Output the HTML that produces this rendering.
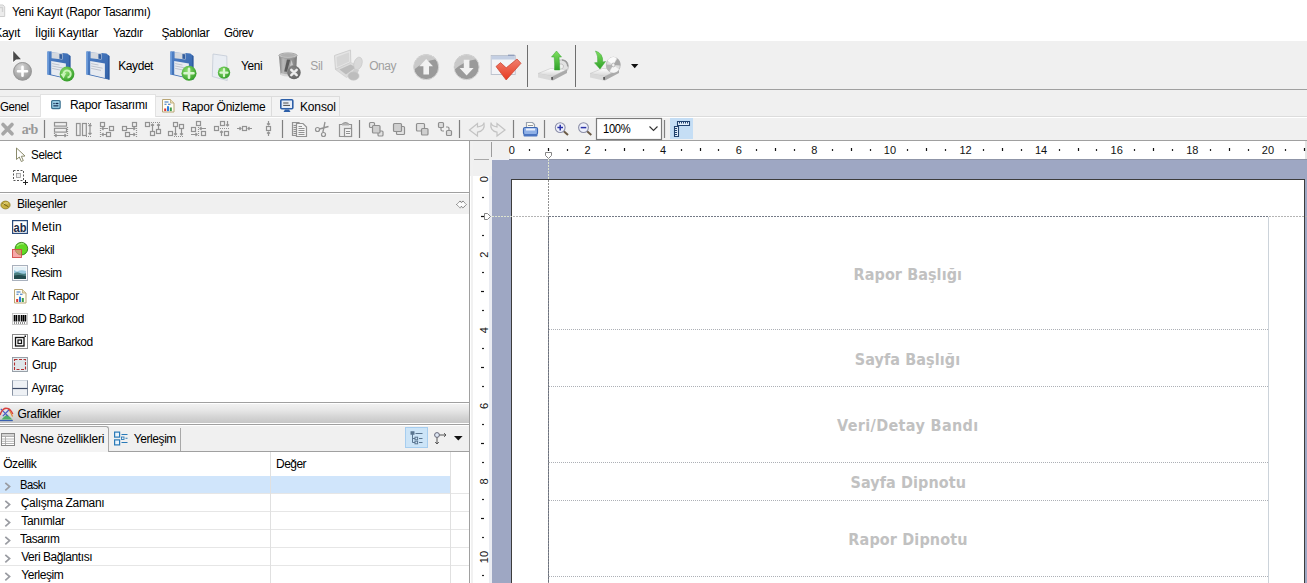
<!DOCTYPE html>
<html lang="tr">
<head>
<meta charset="utf-8">
<title>Yeni Kayıt (Rapor Tasarımı)</title>
<style>
*{box-sizing:border-box;margin:0;padding:0}
html,body{width:1307px;height:583px;overflow:hidden;background:#fff}
body{position:relative;font-family:"Liberation Sans","DejaVu Sans",sans-serif;font-size:12px;color:#000}
.a{position:absolute;white-space:nowrap}
.t{position:absolute;white-space:nowrap;line-height:16px;height:16px;letter-spacing:-0.3px}
.dis{color:#a0a0a0}
svg{position:absolute;overflow:visible}
/* regions */
#toolbar{left:0;top:41px;width:1307px;height:48px;background:#f0f0f0}
#tbline{left:0;top:89px;width:1307px;height:1px;background:#a0a0a0}
#tabarea{left:0;top:90px;width:1307px;height:28px;background:#f0f0f0}
#dtool{left:0;top:118px;width:1307px;height:22px;background:#f0f0f0}
#dline{left:0;top:140px;width:1307px;height:1px;background:#a0a0a0}
.tab{position:absolute;top:96px;height:20px;border:1px solid #dcdcdc;border-bottom:none;background:#f3f3f3}
.tab.act{background:#fff;top:94px;height:23px;border-color:#e2e2e2}
.band{position:absolute;left:548px;width:720px;height:20px;line-height:20px;text-align:center;font-family:"DejaVu Sans Condensed","DejaVu Sans",sans-serif;font-weight:bold;font-size:16px;color:#c1c1c1;white-space:nowrap}
.sep{position:absolute;width:1px;background:#a0a0a0}
</style>
</head>
<body>
<!-- title -->
<svg style="left:0;top:4px" width="6" height="14"><path d="M-6,1 H3 L4.700,2.600 V12.500 H-6 Z" fill="#ececec" stroke="#cdcdcd" stroke-width="1"/><path d="M-1,3.500 H3.200 M2.500,3.500 V8" stroke="#d2d2d2" stroke-width="1.400"/></svg>
<div class="t" style="left:11.9px;top:4px;letter-spacing:-0.30px">Yeni Kayıt (Rapor Tasarımı)</div>
<!-- menu -->
<div class="t" style="left:-5.8px;top:25px;letter-spacing:-0.30px">Kayıt</div>
<div class="t" style="left:35.0px;top:25px;letter-spacing:-0.11px">İlgili Kayıtlar</div>
<div class="t" style="left:112.8px;top:25px;transform-origin:0 0;transform:scaleX(0.954);letter-spacing:-0.47px">Yazdır</div>
<div class="t" style="left:161.4px;top:25px;letter-spacing:-0.30px">Şablonlar</div>
<div class="t" style="left:224.3px;top:25px;transform-origin:0 0;transform:scaleX(0.960);letter-spacing:-0.48px">Görev</div>

<div class="a" id="toolbar"></div>
<div class="a" id="tbline"></div>
<div class="a" id="tabarea"></div>
<div class="a" id="dtool"></div>
<div class="a" id="dline"></div>

<!-- TOOLBAR-START -->
<svg width="0" height="0" style="left:0;top:0">
<defs>
<linearGradient id="gFl" x1="0" y1="0" x2="1" y2="1"><stop offset="0" stop-color="#4f80c6"/><stop offset="1" stop-color="#3262a8"/></linearGradient>
<radialGradient id="gGr" cx="0.4" cy="0.35" r="0.7"><stop offset="0" stop-color="#8fe070"/><stop offset="1" stop-color="#2f9a25"/></radialGradient>
<radialGradient id="gGy" cx="0.4" cy="0.3" r="0.8"><stop offset="0" stop-color="#d8d8d8"/><stop offset="1" stop-color="#8a8a8a"/></radialGradient>
<linearGradient id="gGy2" x1="0" y1="0" x2="0" y2="1"><stop offset="0" stop-color="#c8c8c8"/><stop offset="1" stop-color="#8c8c8c"/></linearGradient>
<linearGradient id="gRed" x1="0" y1="0" x2="0" y2="1"><stop offset="0" stop-color="#f08070"/><stop offset="1" stop-color="#e8391f"/></linearGradient>
<linearGradient id="gDrv" x1="0" y1="0" x2="0" y2="1"><stop offset="0" stop-color="#ffffff"/><stop offset="1" stop-color="#d4d4d4"/></linearGradient>
<linearGradient id="gArr" x1="0" y1="0" x2="0" y2="1"><stop offset="0" stop-color="#7fe060"/><stop offset="1" stop-color="#2fa028"/></linearGradient>
<g id="floppy">
  <path d="M0.400,0.500 L4.500,0.300 L4.600,1.600 L15.500,2.300 L15.600,2 L20.400,2.400 L23.400,5.100 L23.400,28.800 L0.400,23.600 Z" fill="url(#gFl)"/>
  <path d="M0.400,0.500 L1.900,0.450 L1.900,23.950 L0.400,23.600 Z" fill="#6b9cdc"/>
  <path d="M22.300,4.200 L23.400,5.100 L23.400,28.800 L22.300,28.550 Z" fill="#2c569a"/>
  <path d="M4.600,1.600 L15.500,2.300 L15.500,8.500 L4.600,7.300 Z" fill="#d5d9df"/>
  <path d="M12.400,3 L15,3.200 L15,8 L12.400,7.700 Z" fill="#355f9e"/>
  <path d="M4.200,10 L18.900,12.600 L18.900,27 L4.200,23.600 Z" fill="#e7ebf1"/>
  <path d="M5.200,12.600 L12.500,14 M5.200,15 L16.500,17.200 M5.200,17.400 L15,19.400" stroke="#b4b9c3" stroke-width="0.800" fill="none"/>
</g>
</defs>
</svg>
<!-- icon 1: pointer + plus -->
<svg style="left:10px;top:48px" width="26" height="36" viewBox="10 48 26 36">
  <path d="M12.5,50 L12.5,63.5 L16,60.5 L22,60 Z" fill="#fff" opacity="0.9"/>
  <path d="M13.2,51 L13.2,62 L16,59.5 L21,59.2 Z" fill="#4a4a4a"/>
  <circle cx="22.5" cy="71.3" r="9.3" fill="url(#gGy)"/>
  <circle cx="22.5" cy="71.3" r="8.8" fill="none" stroke="#9a9a9a" stroke-width="1"/>
  <path d="M22.5,66.8 V75.8 M18,71.3 H27" stroke="#fff" stroke-width="2.6" stroke-linecap="round"/>
</svg>
<!-- icon 2: floppy + refresh -->
<svg style="left:47px;top:51px" width="30" height="32"><use href="#floppy"/>
  <circle cx="20" cy="23" r="7.4" fill="url(#gGr)"/>
  <path d="M16.8,24.5 A3.6,3.6 0 1 1 20.5,26.6" fill="none" stroke="#c9f4b8" stroke-width="2"/>
  <path d="M13.6,23 L19.200,22 L16.600,27.400 Z" fill="#c9f4b8"/>
</svg>
<!-- icon 3: floppy -->
<svg style="left:86px;top:51px" width="30" height="32"><use href="#floppy"/></svg>
<div class="t" style="left:118.3px;top:58px;letter-spacing:-0.44px">Kaydet</div>
<!-- icon 4: floppy + plus -->
<svg style="left:170px;top:51px" width="30" height="32"><use href="#floppy"/>
  <circle cx="19" cy="22.3" r="7.5" fill="url(#gGr)"/>
  <path d="M19,17.8 V26.8 M14.5,22.3 H23.5" stroke="#d9f5d0" stroke-width="2.6" stroke-linecap="round"/>
</svg>
<!-- icon 5: page + plus -->
<svg style="left:212px;top:53px" width="20" height="30">
  <path d="M1,1 L14.8,3 L15.2,27.5 L0.3,23.5 Z" fill="#e9edf3" stroke="#c3cad6" stroke-width="0.8"/>
  <circle cx="12" cy="19.6" r="6.2" fill="url(#gGr)"/>
  <path d="M12,16 V23.2 M8.4,19.6 H15.6" stroke="#d9f5d0" stroke-width="2.2" stroke-linecap="round"/>
</svg>
<div class="t" style="left:240.9px;top:58px;transform-origin:0 0;transform:scaleX(0.984);letter-spacing:-0.31px">Yeni</div>
<!-- icon 6: trash + x -->
<svg style="left:277px;top:52px" width="26" height="30">
  <defs><linearGradient id="gTr" x1="0" y1="0" x2="1" y2="0"><stop offset="0" stop-color="#7e7e7e"/><stop offset="0.22" stop-color="#b9b9b9"/><stop offset="0.5" stop-color="#a2a2a2"/><stop offset="0.8" stop-color="#8d8d8d"/><stop offset="1" stop-color="#777"/></linearGradient>
  <radialGradient id="gXb" cx="0.4" cy="0.35" r="0.75"><stop offset="0" stop-color="#8e8e8e"/><stop offset="1" stop-color="#5e5e5e"/></radialGradient></defs>
  <path d="M2,3.500 L20,3.500 L19,22.500 Q11,25.500 3.500,22.500 Z" fill="url(#gTr)"/>
  <path d="M3.600,21 Q11,23.500 19,21 L18.900,23 Q11,26 3.700,23 Z" fill="#d6d6d6"/>
  <ellipse cx="11" cy="3.600" rx="9.200" ry="2.700" fill="#c4c4c4" stroke="#9c9c9c" stroke-width="0.800"/>
  <ellipse cx="11" cy="3.300" rx="7.500" ry="1.600" fill="#b0b0b0"/>
  <path d="M10,7.500 L7.200,19.500 L10,19.800 L13.200,7.800 Z" fill="#5a5a5a"/>
  <path d="M14.500,8 L13,14 L16,13 Z" fill="#c8c8c8"/>
  <circle cx="17" cy="20.500" r="6.700" fill="url(#gXb)"/>
  <path d="M14.300,17.800 L19.700,23.200 M19.700,17.800 L14.300,23.200" stroke="#ececec" stroke-width="2.500" stroke-linecap="round"/>
</svg>
<div class="t dis" style="left:310.3px;top:58px;letter-spacing:-0.30px">Sil</div>
<!-- icon 7: laptop+stamp disabled -->
<svg style="left:333px;top:49px" width="32" height="32">
  <path d="M1.5,6.5 L17.5,1 L17.8,13.5 L2.5,20.5 Z" fill="#e4e4e4" stroke="#cfcfcf" stroke-width="1"/>
  <path d="M3.5,8 L16,3.5 L16.2,12.5 L4.2,18 Z" fill="#d6d6d6"/>
  <path d="M2.5,20.5 L17.8,13.5 L27,18 L13.5,28.5 Z" fill="#dcdcdc" stroke="#cfcfcf" stroke-width="0.8"/>
  <path d="M6.5,20.5 L17.5,15.5 L23,18.2 L13,25.5 Z" fill="#bcbcbc"/>
  <ellipse cx="25" cy="14.5" rx="4" ry="6.5" transform="rotate(18 25 14.5)" fill="#d9d9d9" stroke="#c6c6c6" stroke-width="0.6"/>
  <path d="M21,20 L26,21 L23.5,27 L18.5,25 Z" fill="#cdcdcd"/>
  <ellipse cx="20.5" cy="27" rx="5.6" ry="4.2" fill="#bdbdbd" stroke="#c9c9c9" stroke-width="0.6"/>
</svg>
<div class="t dis" style="left:369.2px;top:58px;letter-spacing:-0.43px">Onay</div>
<!-- icon 8/9: up/down -->
<svg style="left:412px;top:53px" width="28" height="28">
  <circle cx="14.2" cy="14.1" r="12.5" fill="#9a9a9a"/>
  <path d="M2.2,16.5 A12.4,12.4 0 0 1 24,6.2 Q12,8 2.2,16.5 Z" fill="#c9c9c9"/>
  <circle cx="14.2" cy="14.1" r="12.5" fill="none" stroke="#d6d6d6" stroke-width="1"/>
  <path d="M14.2,6 L21,13.2 L17,13.2 L17,21.5 L11.4,21.5 L11.4,13.2 L7.4,13.2 Z" fill="#f2f2f2"/>
</svg>
<svg style="left:452px;top:53px" width="28" height="28">
  <circle cx="14.6" cy="14.1" r="12.5" fill="#9a9a9a"/>
  <path d="M2.6,16.5 A12.4,12.4 0 0 1 24.4,6.2 Q12,8 2.6,16.5 Z" fill="#c9c9c9"/>
  <circle cx="14.6" cy="14.1" r="12.5" fill="none" stroke="#d6d6d6" stroke-width="1"/>
  <path d="M14.6,22.5 L21.6,15 L17.4,15 L17.4,6.8 L11.8,6.8 L11.8,15 L7.6,15 Z" fill="#f2f2f2"/>
</svg>
<!-- icon 10: window + check -->
<svg style="left:490px;top:54px" width="34" height="28">
  <rect x="1.2" y="1.5" width="24" height="19" fill="#f3f4f7" stroke="#b9bfcc" stroke-width="0.9"/>
  <rect x="1.6" y="1.9" width="23.2" height="3.6" fill="#c4cfe3"/>
  <path d="M18,1.2 h6.5" stroke="#7d8fb3" stroke-width="1"/>
  <path d="M6,12.5 L10.5,8.6 L16.2,13.8 L27,5 L31,9.3 L16.2,26 Z" fill="url(#gRed)" stroke="#c8402c" stroke-width="0.7"/>
</svg>
<div class="sep" style="left:527px;top:45px;height:42px;background:#6e6e6e"></div>
<!-- icon 11: drive up -->
<svg style="left:537px;top:49px" width="34" height="34">
  <path d="M20.500,11.500 Q31,8.500 31.500,17.500 Q31,23.500 24,25.500 L19.500,22 Q26.500,20.500 26.500,17 Q26,14 20.500,15.500 Z" fill="#e2e2e2" stroke="#b2b2b2" stroke-width="0.700"/>
  <path d="M25,11 Q30.500,11.500 30.800,17.500" fill="none" stroke="#9a9a9a" stroke-width="1.400"/>
  <path d="M1,24.500 L13.500,19.500 L30,20.500 L15.500,27.500 Z" fill="url(#gDrv)" stroke="#bdbdbd" stroke-width="0.500"/>
  <path d="M1,24.500 L15.500,27.500 L15.500,31.800 L1,28.500 Z" fill="#d9d9d9"/>
  <path d="M15.500,27.500 L30,20.500 L30,24 L15.500,31.800 Z" fill="#ababab"/>
  <rect x="14.500" y="28" width="1.100" height="2.800" fill="#111"/>
  <path d="M19.500,2 L24.500,8 L22,8 L22.500,15 L22.800,21 L17.500,21 L17.600,15 L17.200,8 L14.500,8 Z" fill="url(#gArr)" stroke="#35a52e" stroke-width="0.500"/>
</svg>
<div class="sep" style="left:575px;top:45px;height:42px;background:#6e6e6e"></div>
<!-- icon 12: drive down -->
<svg style="left:589px;top:49px" width="34" height="34">
  <path d="M1,24.500 L13.500,19.500 L30,20.500 L15.500,27.500 Z" fill="url(#gDrv)" stroke="#bdbdbd" stroke-width="0.500"/>
  <path d="M1,24.500 L15.500,27.500 L15.500,31.800 L1,28.500 Z" fill="#d9d9d9"/>
  <path d="M15.500,27.500 L30,20.500 L30,24 L15.500,31.800 Z" fill="#ababab"/>
  <rect x="14.500" y="28" width="1.100" height="2.800" fill="#111"/>
  <ellipse cx="24.300" cy="16" rx="7" ry="7.800" fill="#dedede" stroke="#b0b0b0" stroke-width="0.700"/>
  <path d="M24.300,16 L18.500,11.500 A7,7.800 0 0 1 27.500,9 Z" fill="#fafafa"/>
  <path d="M24.300,16 L30,20.500 A7,7.800 0 0 1 21,22.800 Z" fill="#f6f6f6"/>
  <path d="M24.300,16 L28.500,9.500 A7,7.800 0 0 1 31.300,16.500 Z" fill="#a8a8a8"/>
  <path d="M24.300,16 L20,22.500 A7,7.800 0 0 1 17.300,15.500 Z" fill="#b4b4b4"/>
  <ellipse cx="24.300" cy="16" rx="1.700" ry="1.900" fill="#f2f2f2" stroke="#9b9b9b" stroke-width="0.600"/>
  <path d="M6.500,2 Q14,4 13.800,13 L16.500,12.500 L11,20 L5.500,13.800 L8.600,13.500 Q9.500,7 6.500,2 Z" fill="url(#gArr)" stroke="#35a52e" stroke-width="0.500"/>
</svg>
<svg style="left:631px;top:64px" width="8" height="5"><path d="M0,0 H7.4 L3.7,4.2 Z" fill="#111"/></svg>
<!-- TOOLBAR-END -->
<!-- TABS-START -->
<div class="a" style="left:0;top:116px;width:1307px;height:2px;background:#fff;border-top:1px solid #dcdcdc"></div>
<div class="tab" style="left:-2px;width:43px"></div>
<div class="tab" style="left:155px;width:117px"></div>
<div class="tab" style="left:271px;width:69px"></div>
<div class="tab act" style="left:40px;width:116px"></div>
<div class="t" style="left:0.3px;top:99px;transform-origin:0 0;transform:scaleX(0.958);letter-spacing:-0.41px">Genel</div>
<svg style="left:51px;top:100px" width="10" height="10"><rect x="0.7" y="0.7" width="8.4" height="7.8" rx="0.9" fill="#aee4fa" stroke="#3a6f8f" stroke-width="1.3"/><path d="M2.3,3.5 H3.7 M4.500,3.500 H7.500 M2.300,5.900 H7.500" stroke="#10294f" stroke-width="1.400"/></svg>
<div class="t" style="left:70.0px;top:97px;letter-spacing:-0.30px">Rapor Tasarımı</div>
<svg style="left:162px;top:99px" width="13" height="14">
  <path d="M0.5,0.5 H8.5 L12,4 V13 H0.5 Z" fill="#fffef4" stroke="#b9a676" stroke-width="1"/>
  <path d="M8.5,0.5 V4 H12" fill="#e9dfb8" stroke="#b9a676" stroke-width="0.8"/>
  <path d="M2.5,3 H6.5 M2.5,5.2 H4.5 M6,5.2 H8.5" stroke="#2f6cc0" stroke-width="1.1"/>
  <rect x="2.2" y="9.5" width="2" height="2.6" fill="#d33"/><rect x="5" y="7.2" width="2" height="4.9" fill="#2c7be0"/><rect x="7.8" y="8.5" width="2" height="3.6" fill="#3a9a4a"/>
</svg>
<div class="t" style="left:182.0px;top:99px;letter-spacing:-0.24px">Rapor Önizleme</div>
<svg style="left:280px;top:99px" width="14" height="14">
  <rect x="0.8" y="0.8" width="12" height="9" rx="1" fill="#e8eef8" stroke="#2d5fa8" stroke-width="1.6"/>
  <path d="M3.2,4 H8.5 M3.2,6.4 H10" stroke="#4a4a4a" stroke-width="1"/>
  <path d="M5,10.5 H9 L10.5,13 H3.5 Z" fill="#2d5fa8"/>
</svg>
<div class="t" style="left:299.9px;top:99px;letter-spacing:-0.12px">Konsol</div>
<!-- TABS-END -->
<!-- DTOOL-START -->
<svg style="left:0;top:118px" width="700" height="22" viewBox="0 118 700 22" fill="none" stroke="#929292" stroke-width="1.2">
  <!-- X -->
  <path d="M3,124.5 L12,133.8 M12,124.5 L3,133.8" stroke="#a6a6a6" stroke-width="3.6" stroke-linecap="round"/>
  <text x="21.8" y="133.8" font-family="Liberation Serif,serif" font-weight="bold" font-size="14" fill="#989898" stroke="none" textLength="16.4" lengthAdjust="spacing">a·b</text>
  <path d="M44.5,120 V138" stroke="#7f7f7f"/>
  <!-- same width -->
  <rect x="54.5" y="122.5" width="12" height="3.6"/><rect x="54.5" y="128.3" width="12" height="3.8"/>
  <path d="M55,135.5 H66 M56.5,134 L55,135.5 L56.5,137 M64.5,134 L66,135.5 L64.5,137" />
  <path d="M67.5,127 V137" stroke-dasharray="1 1"/><path d="M54.5,133 V137" stroke-dasharray="1 1"/>
  <!-- same height -->
  <rect x="76.5" y="123.5" width="3.6" height="12"/><rect x="82.5" y="123.5" width="3.8" height="12"/>
  <path d="M90,124.5 V134.5 M88.5,126 L90,124.5 L91.500,126 M88.5,133 L90,134.5 L91.5,133"/>
  <path d="M86,123.500 H92 M86,136.5 H92" stroke-dasharray="1 1"/>
  <!-- align left -->
  <rect x="100.500" y="122.500" width="4" height="4"/><rect x="109.500" y="126.500" width="4" height="4"/><rect x="106.500" y="132.500" width="4" height="4"/>
  <path d="M100.500,128 V137" stroke-dasharray="1 1"/><path d="M102,128.500 H108 M103.500,127 L102,128.500 L103.500,130 M102,134.500 H106 M103.500,133 L102,134.500 L103.500,136"/>
  <!-- align right -->
  <rect x="132.500" y="122.500" width="4" height="4"/><rect x="122.500" y="126.500" width="4" height="4"/><rect x="125.500" y="132.500" width="4" height="4"/>
  <path d="M136.500,128 V137" stroke-dasharray="1 1"/><path d="M127,128.500 H135 M133.500,127 L135,128.500 L133.500,130 M130,134.500 H135 M133.500,133 L135,134.500 L133.500,136"/>
  <!-- align top -->
  <rect x="145.500" y="122.500" width="4" height="4"/><rect x="156.500" y="129.500" width="4" height="4"/><rect x="150.500" y="131.500" width="4" height="4"/>
  <path d="M151,122.500 H160" stroke-dasharray="1 1"/><path d="M152.500,124 V131 M151,125.500 L152.500,124 L154,125.500 M158.500,124 V129 M157,125.500 L158.500,124 L160,125.500"/>
  <!-- align bottom -->
  <rect x="173.500" y="122.500" width="4" height="4"/><rect x="179.500" y="124.500" width="4" height="4"/><rect x="168.500" y="131.500" width="4" height="4"/>
  <path d="M174,136.500 H184" stroke-dasharray="1 1"/><path d="M175.500,127 V135 M174,133.500 L175.500,135 L177,133.500 M181.500,129 V135 M180,133.500 L181.500,135 L183,133.500"/>
  <!-- center h -->
  <rect x="196.500" y="121.500" width="4" height="4"/><rect x="191.500" y="127.500" width="4" height="4"/><rect x="201.500" y="131.500" width="4" height="4"/>
  <path d="M198.500,127 V137" stroke-dasharray="1 1"/><path d="M200,128.500 H206 M201.500,127 L200,128.500 L201.500,130 M191,134.500 H197 M195.500,133 L197,134.500 L195.500,136"/>
  <!-- center v -->
  <rect x="220.500" y="121.500" width="4" height="4"/><rect x="214.500" y="126.500" width="4" height="4"/><rect x="224.500" y="131.500" width="4" height="4"/>
  <path d="M220,128.500 H229" stroke-dasharray="1 1"/><path d="M227.500,121 V126 M226,124.500 L227.500,126 L229,124.500 M221.500,131 V136 M220,132.500 L221.500,131 L223,132.500"/>
  <!-- h center in band -->
  <rect x="242.500" y="126.500" width="4" height="4"/><path d="M237,128.500 H241 M239.500,127 L241,128.500 L239.500,130 M248,128.500 H252 M249.500,127 L248,128.500 L249.500,130"/>
  <!-- v center in band -->
  <rect x="266.500" y="126.500" width="4" height="4"/><path d="M268.500,121 V125 M267,123.500 L268.500,125 L270,123.500 M268.500,132 V136 M267,133.500 L268.500,132 L270,133.500"/>
  <path d="M282.500,120 V138" stroke="#7f7f7f"/>
  <!-- copy -->
  <path d="M292.500,122.500 H299 V135.500 H292.500 Z" fill="#e9e9e9"/><path d="M293.500,125.500 H296 M293.500,127.500 H296 M293.500,129.500 H296 M293.500,131.500 H296 M293.500,133.500 H296"/>
  <path d="M296.500,123.500 H303 L306.500,127 V136.500 H296.500 Z" fill="#f4f4f4"/><path d="M298.500,126.500 H302 M298.500,128.500 H304.500 M298.500,130.500 H304.500 M298.500,132.500 H304.500 M298.500,134.500 H304.500"/>
  <!-- cut -->
  <circle cx="317.500" cy="129.500" r="2"/><circle cx="323.500" cy="134.500" r="2"/>
  <path d="M319.500,129 L328.500,126.500 M322.800,132.500 L325,122" stroke-width="1.3"/>
  <!-- paste -->
  <path d="M339.500,124.500 H351.500 V136.500 H339.500 Z" fill="#ebebeb"/><path d="M342,124.500 Q345.500,121 349,124.500" /><rect x="342" y="123.500" width="7" height="2" fill="#b0b0b0" stroke="none"/>
  <rect x="344.500" y="128.500" width="7" height="8" fill="#f7f7f7"/><path d="M346,131.500 H350 M346,133.500 H350"/>
  <path d="M359.500,120 V138" stroke="#7f7f7f"/>
  <!-- layering -->
  <g stroke="#8f8f8f" stroke-width="1.2">
  <rect x="369.500" y="122.500" width="5" height="5" rx="1" fill="#e2e2e2"/><rect x="378" y="131" width="5" height="5" rx="1" fill="#e2e2e2"/><rect x="372.500" y="125.500" width="7.500" height="7.500" rx="1" fill="#cfcfcf"/>
  <rect x="396.500" y="126.500" width="8" height="8" rx="1" fill="#e2e2e2"/><rect x="393.500" y="123.500" width="8" height="8" rx="1" fill="#cfcfcf"/>
  <rect x="416.500" y="123.500" width="8" height="7.500" rx="1" fill="#e2e2e2"/><rect x="421.500" y="128.500" width="6.500" height="6.500" rx="1" fill="#cfcfcf"/>
  <rect x="438.500" y="122.500" width="5" height="5" rx="1" fill="#dcdcdc"/><rect x="446.500" y="130.500" width="5" height="5" rx="1" fill="#dcdcdc"/><path d="M441,127.500 V129.500 Q441,131 442.500,131 H444 M449,130.500 V128.500 Q449,127 447.500,127 H446" fill="none"/>
  </g>
  <path d="M459.500,120 V138" stroke="#7f7f7f"/>
  <!-- undo / redo -->
  <path d="M469.500,130 L477.500,123.500 V127 Q484,126 484,122.500 Q485.500,131 477.500,132.200 V136 Z" stroke="#c3c3c3" fill="#efefef"/>
  <path d="M505,130 L497,123.500 V127 Q491,126 491,122.500 Q489.500,131 497,132.200 V136 Z" stroke="#c3c3c3" fill="#efefef"/>
  <path d="M513.500,120 V138" stroke="#7f7f7f"/>
  <!-- print -->
  <path d="M526.500,122.500 H532.500 L534.500,124.500 V129 H526.500 Z" fill="#fbfbf6" stroke="#9aa3b0"/><path d="M528,125.500 H533 M528,127.500 H533" stroke="#8a8a8a" stroke-width="0.9"/>
  <rect x="523.500" y="127.500" width="14" height="7" rx="1.500" fill="#8fb0e6" stroke="#3d67b4"/><rect x="526" y="128.500" width="9" height="2" fill="#e8eefc" stroke="none"/>
  <rect x="523.500" y="134" width="14" height="2.500" rx="1" fill="#4a74c0" stroke="none"/>
  <path d="M544.500,120 V138" stroke="#7f7f7f"/>
  <!-- zoom in/out -->
  <path d="M563.500,131 L568,135" stroke="#6b5a45" stroke-width="2"/><circle cx="560.200" cy="127.600" r="4.900" fill="#eef0fb" stroke="#8c8fa8" stroke-width="1.100"/><path d="M557.400,127.600 H563 M560.200,124.800 V130.400" stroke="#2a32a8" stroke-width="1.500"/>
  <path d="M586.800,131 L591.300,135" stroke="#6b5a45" stroke-width="2"/><circle cx="583.500" cy="127.600" r="4.900" fill="#eef0fb" stroke="#8c8fa8" stroke-width="1.100"/><path d="M580.700,127.600 H586.300" stroke="#2a32a8" stroke-width="1.500"/>
  <!-- combo -->
  <rect x="596.500" y="118.500" width="65" height="21" fill="#fff" stroke="#7a7a7a"/>
  <path d="M649.500,126.500 L653.500,130.500 L657.500,126.500" stroke="#333" stroke-width="1.100"/>
  <path d="M664.500,120 V138" stroke="#7f7f7f"/>
  <!-- ruler button -->
  <rect x="670" y="118" width="23" height="21" fill="#c5def5" stroke="none"/>
  <path d="M677.500,121.500 H689.500 V125.500 H677.500 Z M674.500,126.500 H678.500 V136.500 H674.500 Z" fill="#e4f0fb" stroke="#21426e" stroke-width="1.100"/>
  <path d="M679.500,121.500 V123.500 M681.500,121.500 V123.500 M683.500,121.500 V123.500 M685.500,121.500 V123.500 M687.500,121.500 V123.500 M675,128.500 H677 M675,130.500 H677 M675,132.500 H677 M675,134.500 H677" stroke="#21426e" stroke-width="1"/>
</svg>
<div class="t" style="left:602.9px;top:121px;font-size:12.500px;transform-origin:0 0;transform:scaleX(0.895);letter-spacing:-0.38px">100%</div>
<!-- DTOOL-END -->
<!-- LEFT-START -->
<div class="a" style="left:0;top:141px;width:469px;height:442px;background:#fff"></div>
<div class="a" style="left:469px;top:141px;width:1px;height:442px;background:#a0a0a0"></div>
<svg style="left:15px;top:147px" width="12" height="16"><path d="M1.500,1 V12.500 L4.300,10 L6.300,14.500 L8.300,13.600 L6.300,9.300 L10,9 Z" fill="#fff" stroke="#8a8a6a" stroke-width="1"/></svg>
<div class="t" style="left:30.8px;top:147px;transform-origin:0 0;transform:scaleX(0.972);letter-spacing:-0.36px">Select</div>
<svg style="left:12px;top:169px" width="18" height="17"><rect x="1.500" y="1.500" width="10" height="10" fill="none" stroke="#555" stroke-width="1" stroke-dasharray="2 1.500"/><rect x="4.500" y="4.500" width="4" height="4" fill="#eee" stroke="#999" stroke-width="0.800"/><path d="M13.500,11 V16 M11,13.500 H16" stroke="#222" stroke-width="1"/></svg>
<div class="t" style="left:31.3px;top:170px;letter-spacing:-0.22px">Marquee</div>
<div class="a" style="left:0;top:192px;width:469px;height:1px;background:#a0a0a0"></div>
<div class="a" style="left:0;top:194px;width:469px;height:20px;background:#f0f0f0"></div>
<svg style="left:0;top:200px" width="12" height="10"><ellipse cx="5.500" cy="5" rx="4.600" ry="3.900" fill="#c8b040" stroke="#8a7a20" stroke-width="0.800"/><path d="M2.500,3.500 L8.500,6.800" stroke="#6f5f18" stroke-width="1"/><path d="M2.600,4.800 Q5,2 8,3" stroke="#efe4a0" stroke-width="0.800" fill="none"/></svg>
<div class="t" style="left:16.9px;top:196px;letter-spacing:-0.30px">Bileşenler</div>
<svg style="left:456px;top:200px" width="11" height="9"><path d="M0.600,4.500 L4.200,0.900 L5.500,2.800 L6.800,0.900 L10.400,4.500 L6.800,8.100 L5.500,6.200 L4.200,8.100 Z" fill="#fdfdfd" stroke="#5a5a5a" stroke-width="0.900" stroke-dasharray="1.200 0.500"/></svg>
<div class="t" style="left:31.4px;top:219px;letter-spacing:0.25px">Metin</div>
<div class="t" style="left:31.4px;top:242px;transform-origin:0 0;transform:scaleX(0.970);letter-spacing:-0.40px">Şekil</div>
<div class="t" style="left:31.4px;top:265px;transform-origin:0 0;transform:scaleX(0.972);letter-spacing:-0.55px">Resim</div>
<div class="t" style="left:31.6px;top:288px;letter-spacing:-0.31px">Alt Rapor</div>
<div class="t" style="left:31.8px;top:311px;transform-origin:0 0;transform:scaleX(0.983);letter-spacing:-0.44px">1D Barkod</div>
<div class="t" style="left:31.2px;top:334px;letter-spacing:-0.48px">Kare Barkod</div>
<div class="t" style="left:31.5px;top:357px;transform-origin:0 0;transform:scaleX(0.972);letter-spacing:-0.43px">Grup</div>
<div class="t" style="left:31.4px;top:380px;letter-spacing:-0.29px">Ayıraç</div>
<svg style="left:12px;top:220px" width="16" height="14"><rect x="0.600" y="0.600" width="14.800" height="12.800" fill="#fff" stroke="#2b4a7a" stroke-width="1.200"/><text x="1.500" y="11.600" font-family="Liberation Sans,sans-serif" font-weight="bold" font-size="12.500" fill="#1c2b45" textLength="13" lengthAdjust="spacingAndGlyphs">ab</text></svg>
<svg style="left:12px;top:241px" width="17" height="17"><circle cx="9.400" cy="7.700" r="6.300" fill="#62d824" stroke="#2f7f14" stroke-width="0.900"/><path d="M5,5 Q8,1.800 12,3" stroke="#a8f080" stroke-width="1.300" fill="none"/><rect x="0.500" y="8.500" width="9" height="8" fill="#f28888" fill-opacity="0.720" stroke="#d24a4a" stroke-width="0.900"/></svg>
<svg style="left:12px;top:265px" width="16" height="16"><rect x="0.500" y="0.500" width="15" height="15" fill="#f7f8fa" stroke="#a9b1bd" stroke-width="1"/><rect x="2" y="2" width="12" height="12" fill="#9ccbe0"/><path d="M2,2 H14 V6 Q9,4.500 5,6.500 L2,5 Z" fill="#e4f1f7"/><path d="M2,8.500 Q5,6.500 8,8 T14,8.200 V14 H2 Z" fill="#4a7f80"/><path d="M2,10.500 Q7,9 14,11.200 V14 H2 Z" fill="#234c4e"/></svg>
<svg style="left:14px;top:289px" width="13" height="15"><path d="M0.500,0.500 H8.500 L12,4 V14 H0.500 Z" fill="#fffef4" stroke="#b9a676" stroke-width="1"/><path d="M8.500,0.500 V4 H12" fill="#e9dfb8" stroke="#b9a676" stroke-width="0.800"/><path d="M2.500,3 H6.500 M2.500,5.200 H4.500 M6,5.200 H8.500" stroke="#2f6cc0" stroke-width="1.100"/><rect x="2.200" y="10" width="2" height="3" fill="#d33"/><rect x="5" y="7.700" width="2" height="5.300" fill="#2c7be0"/><rect x="7.800" y="9" width="2" height="4" fill="#3a9a4a"/></svg>
<svg style="left:12px;top:313px" width="16" height="12"><rect x="0.500" y="0.500" width="15" height="11" fill="#fff" stroke="#c0c0c0" stroke-width="0.800"/><path d="M2.500,2 V8.500 M4.500,2 V8.500 M7,2 V8.500 M9.500,2 V8.500 M11.500,2 V8.500 M13.500,2 V8.500" stroke="#000" stroke-width="1.600"/><path d="M2,10 H14.500" stroke="#222" stroke-width="1" stroke-dasharray="1 1"/></svg>
<svg style="left:12px;top:334px" width="16" height="15"><rect x="0.500" y="0.500" width="15" height="14" fill="#fff" stroke="#8a8a8a" stroke-width="1"/><rect x="3.500" y="3.500" width="8.500" height="8.500" fill="none" stroke="#111" stroke-width="1.300"/><rect x="6" y="6" width="3.500" height="3.500" fill="none" stroke="#111" stroke-width="1.200"/><rect x="12.500" y="1.500" width="1.500" height="1.500" fill="#111"/></svg>
<svg style="left:12px;top:357px" width="16" height="15"><rect x="0.500" y="0.500" width="15" height="14" fill="#e9eef2" stroke="#8f979f" stroke-width="0.900"/><rect x="2.500" y="2.500" width="11" height="10" fill="#dfe6ea" stroke="#b03030" stroke-width="1.100" stroke-dasharray="3 1.500"/></svg>
<svg style="left:12px;top:380px" width="16" height="16"><rect x="0.500" y="0.500" width="15" height="15" fill="#eef1f5" stroke="#c4ccd6" stroke-width="0.800"/><path d="M0.500,0.500 V15.500 M15.500,0.500 V15.500" stroke="#8a94a4" stroke-width="1"/><path d="M0.500,8.500 H15.500" stroke="#3c4a66" stroke-width="1.200"/></svg>
<div class="a" style="left:0;top:402px;width:469px;height:23px;background:#fff;border-top:1px solid #a0a0a0;border-bottom:1px solid #a0a0a0"></div>
<div class="a" style="left:0;top:404px;width:469px;height:19px;background:linear-gradient(#f1f1f1,#e8e8e8 30%,#d6d6d6 65%,#c6c6c6)"></div>
<svg style="left:0;top:407px" width="13" height="14"><path d="M0,13.500 H12.800" stroke="#3a5fb0" stroke-width="1.300"/><path d="M1.500,12.600 Q4,9.500 6.800,7.400 Q10,9.500 12.300,12.600 Z" fill="#4fae68"/><path d="M8.800,2 L12.600,9.500" stroke="#e58a35" stroke-width="1.200" fill="none"/><path d="M0.800,1.800 L8,9.200 M2.800,9.200 L9.800,2" fill="none" stroke="#4a5cc4" stroke-width="1.200"/><path d="M0,8 Q2.500,0.800 6.500,1.200 Q10.500,1.500 12.800,7" fill="none" stroke="#d9403c" stroke-width="1.400"/></svg>
<div class="t" style="left:17.4px;top:406px;letter-spacing:-0.25px">Grafikler</div>
<div class="a" style="left:0;top:425px;width:469px;height:26px;background:#f0f0f0;border-top:1px solid #fff"></div>
<div class="a" style="left:0;top:451px;width:469px;height:1px;background:#a0a0a0"></div>
<div class="a" style="left:108px;top:428px;width:73px;height:23px;background:#f0f0f0;border-right:1px solid #a8a8a8"></div>
<div class="a" style="left:-1px;top:426px;width:110px;height:26px;background:#f3f3f3;border:1px solid #a8a8a8;border-bottom:none;border-radius:0 3px 0 0"></div>
<svg style="left:1px;top:433px" width="15" height="13"><rect x="0.500" y="0.500" width="13" height="12" fill="#fff" stroke="#868686" stroke-width="1"/><rect x="1" y="1" width="12" height="2.300" fill="#d2d2d2"/><path d="M1,3.500 H13 M1,6 H13 M1,8.300 H13 M1,10.500 H13 M4.500,3.500 V12" stroke="#a2a2a2" stroke-width="0.800"/></svg>
<div class="t" style="left:19.9px;top:431px;letter-spacing:-0.18px">Nesne özellikleri</div>
<svg style="left:114px;top:431px" width="14" height="15"><rect x="0.600" y="1.100" width="5" height="5" fill="#eaf4fc" stroke="#2a7ab8" stroke-width="1.200"/><rect x="0.600" y="8.900" width="5" height="5" fill="#eaf4fc" stroke="#2a7ab8" stroke-width="1.200"/><rect x="7.500" y="6" width="2.500" height="2.500" fill="none" stroke="#2a7ab8" stroke-width="0.900"/><path d="M7.500,3.500 H13.500 M11.500,7.300 H13.500 M7.500,11.500 H13.500" stroke="#2a7ab8" stroke-width="1.100"/></svg>
<div class="t" style="left:133.8px;top:431px;letter-spacing:-0.43px">Yerleşim</div>
<div class="a" style="left:405px;top:427px;width:23px;height:21px;background:#cce4f7;border:1px solid #a6cdef"></div>
<svg style="left:410px;top:431px" width="14" height="14" fill="none" stroke="#5a7590" stroke-width="1"><path d="M2.500,3 V11.500 H5 M2.500,7.500 H5"/><rect x="1" y="0.800" width="3" height="2.400" fill="#5a7590"/><rect x="5" y="6.200" width="2.600" height="2.600"/><rect x="5" y="10.200" width="2.600" height="2.600"/><path d="M5.500,2.500 H12.500 M9,7.500 H12.500 M9,11.500 H12.500"/></svg>
<svg style="left:433px;top:431px" width="15" height="14" fill="none" stroke="#555" stroke-width="1"><circle cx="4" cy="4" r="2.400" fill="#dfe8f4" stroke="#667"/><path d="M6.500,4 H13 M11,2.200 L13,4 L11,5.800 M4,6.500 V13 M2.200,11 L4,13 L5.800,11"/></svg>
<svg style="left:454px;top:436px" width="9" height="5"><path d="M0,0 H8.600 L4.300,4.600 Z" fill="#111"/></svg>
<div class="t" style="left:3.2px;top:456px;letter-spacing:-0.42px">Özellik</div>
<div class="t" style="left:276.0px;top:456px;letter-spacing:-0.53px">Değer</div>
<div class="a" style="left:0;top:476px;width:450px;height:18px;background:#d0e5fb"></div>
<div class="a" style="left:0;top:493px;width:469px;height:1px;background:#e6e6e6"></div>
<div class="a" style="left:0;top:511px;width:469px;height:1px;background:#e6e6e6"></div>
<div class="a" style="left:0;top:529px;width:469px;height:1px;background:#e6e6e6"></div>
<div class="a" style="left:0;top:547px;width:469px;height:1px;background:#e6e6e6"></div>
<div class="a" style="left:0;top:565px;width:469px;height:1px;background:#e6e6e6"></div>
<div class="a" style="left:270px;top:452px;width:1px;height:131px;background:#e0e0e0"></div>
<div class="a" style="left:450px;top:452px;width:1px;height:131px;background:#e0e0e0"></div>
<svg style="left:4px;top:482px" width="8" height="10"><path d="M1.300,0.800 L5.600,4.600 L1.300,8.400" fill="none" stroke="#9a9ca2" stroke-width="1.700"/></svg>
<div class="t" style="left:20.3px;top:477px;transform-origin:0 0;transform:scaleX(0.935);letter-spacing:-0.55px">Baskı</div>
<svg style="left:4px;top:500px" width="8" height="10"><path d="M1.300,0.800 L5.600,4.600 L1.300,8.400" fill="none" stroke="#9a9ca2" stroke-width="1.700"/></svg>
<div class="t" style="left:20.7px;top:495px;letter-spacing:-0.31px">Çalışma Zamanı</div>
<svg style="left:4px;top:518px" width="8" height="10"><path d="M1.300,0.800 L5.600,4.600 L1.300,8.400" fill="none" stroke="#9a9ca2" stroke-width="1.700"/></svg>
<div class="t" style="left:21.2px;top:513px;letter-spacing:-0.30px">Tanımlar</div>
<svg style="left:4px;top:536px" width="8" height="10"><path d="M1.300,0.800 L5.600,4.600 L1.300,8.400" fill="none" stroke="#9a9ca2" stroke-width="1.700"/></svg>
<div class="t" style="left:20.3px;top:531px;transform-origin:0 0;transform:scaleX(0.989);letter-spacing:-0.39px">Tasarım</div>
<svg style="left:4px;top:554px" width="8" height="10"><path d="M1.300,0.800 L5.600,4.600 L1.300,8.400" fill="none" stroke="#9a9ca2" stroke-width="1.700"/></svg>
<div class="t" style="left:21.2px;top:549px;letter-spacing:-0.43px">Veri Bağlantısı</div>
<svg style="left:4px;top:572px" width="8" height="10"><path d="M1.300,0.800 L5.600,4.600 L1.300,8.400" fill="none" stroke="#9a9ca2" stroke-width="1.700"/></svg>
<div class="t" style="left:21.2px;top:567px;letter-spacing:-0.43px">Yerleşim</div>
<!-- LEFT-END -->
<!-- RIGHT-START -->
<div class="a" style="left:470px;top:141px;width:837px;height:442px;background:#fff"></div>
<div class="a" style="left:492px;top:159px;width:815px;height:424px;background:#9ea7c3"></div>
<div class="a" style="left:492px;top:159px;width:17px;height:1px;background:#eef0f6"></div>
<div class="a" style="left:509px;top:159px;width:798px;height:1px;background:#8f95a8"></div>
<div class="a" style="left:470px;top:141px;width:40px;height:18px;background:#f0f0f0"></div>
<div class="a" style="left:470px;top:159px;width:22px;height:17px;background:#f0f0f0"></div>
<div class="a" style="left:471px;top:141px;width:2px;height:442px;background:#f1f1f1"></div>
<div class="a" style="left:489px;top:176px;width:3px;height:407px;background:#eaecf2"></div>
<div class="a" style="left:1305px;top:141px;width:2px;height:18px;background:#e4e4e4"></div>
<div class="a" style="left:491px;top:142px;width:1px;height:15px;background:#9c9c9c"></div>
<div class="a" style="left:474px;top:159px;width:15px;height:1px;background:#a8a8a8"></div>
<div class="a" style="left:511px;top:179px;width:794px;height:410px;background:#fff;border:1px solid #3c3c3c"></div>
<svg style="left:470px;top:141px" width="837" height="442" viewBox="470 141 837 442" font-family="Liberation Sans,sans-serif" font-size="11" fill="#111">
<text x="511.9" y="153.8" text-anchor="middle">0</text>
<rect x="528.9" y="149" width="1.2" height="2" fill="#222"/>
<rect x="547.9" y="148" width="1.2" height="3" fill="#111"/>
<rect x="566.9" y="149" width="1.2" height="2" fill="#222"/>
<text x="587.5" y="153.8" text-anchor="middle">2</text>
<rect x="604.9" y="149" width="1.2" height="2" fill="#222"/>
<rect x="623.9" y="148" width="1.2" height="3" fill="#111"/>
<rect x="642.9" y="149" width="1.2" height="2" fill="#222"/>
<text x="663.1" y="153.8" text-anchor="middle">4</text>
<rect x="680.9" y="149" width="1.2" height="2" fill="#222"/>
<rect x="699.9" y="148" width="1.2" height="3" fill="#111"/>
<rect x="717.9" y="149" width="1.2" height="2" fill="#222"/>
<text x="738.7" y="153.8" text-anchor="middle">6</text>
<rect x="755.9" y="149" width="1.2" height="2" fill="#222"/>
<rect x="774.9" y="148" width="1.2" height="3" fill="#111"/>
<rect x="793.9" y="149" width="1.2" height="2" fill="#222"/>
<text x="814.3" y="153.8" text-anchor="middle">8</text>
<rect x="831.9" y="149" width="1.2" height="2" fill="#222"/>
<rect x="850.9" y="148" width="1.2" height="3" fill="#111"/>
<rect x="869.9" y="149" width="1.2" height="2" fill="#222"/>
<text x="889.9" y="153.8" text-anchor="middle">10</text>
<rect x="906.9" y="149" width="1.2" height="2" fill="#222"/>
<rect x="925.9" y="148" width="1.2" height="3" fill="#111"/>
<rect x="944.9" y="149" width="1.2" height="2" fill="#222"/>
<text x="965.5" y="153.8" text-anchor="middle">12</text>
<rect x="982.9" y="149" width="1.2" height="2" fill="#222"/>
<rect x="1001.9" y="148" width="1.2" height="3" fill="#111"/>
<rect x="1020.9" y="149" width="1.2" height="2" fill="#222"/>
<text x="1041.1" y="153.8" text-anchor="middle">14</text>
<rect x="1058.9" y="149" width="1.2" height="2" fill="#222"/>
<rect x="1077.9" y="148" width="1.2" height="3" fill="#111"/>
<rect x="1095.9" y="149" width="1.2" height="2" fill="#222"/>
<text x="1116.7" y="153.8" text-anchor="middle">16</text>
<rect x="1133.9" y="149" width="1.2" height="2" fill="#222"/>
<rect x="1152.9" y="148" width="1.2" height="3" fill="#111"/>
<rect x="1171.9" y="149" width="1.2" height="2" fill="#222"/>
<text x="1192.3" y="153.8" text-anchor="middle">18</text>
<rect x="1209.9" y="149" width="1.2" height="2" fill="#222"/>
<rect x="1228.9" y="148" width="1.2" height="3" fill="#111"/>
<rect x="1247.9" y="149" width="1.2" height="2" fill="#222"/>
<text x="1267.9" y="153.8" text-anchor="middle">20</text>
<rect x="1284.9" y="149" width="1.2" height="2" fill="#222"/>
<rect x="1303.9" y="148" width="1.2" height="3" fill="#111"/>
<text transform="translate(488,179.1) rotate(-90)" text-anchor="middle">0</text>
<rect x="482" y="196.9" width="2" height="1.2" fill="#222"/>
<rect x="481" y="215.9" width="3" height="1.2" fill="#111"/>
<rect x="482" y="234.9" width="2" height="1.2" fill="#222"/>
<text transform="translate(488,254.7) rotate(-90)" text-anchor="middle">2</text>
<rect x="482" y="271.9" width="2" height="1.2" fill="#222"/>
<rect x="481" y="290.9" width="3" height="1.2" fill="#111"/>
<rect x="482" y="309.9" width="2" height="1.2" fill="#222"/>
<text transform="translate(488,330.3) rotate(-90)" text-anchor="middle">4</text>
<rect x="482" y="347.9" width="2" height="1.2" fill="#222"/>
<rect x="481" y="366.9" width="3" height="1.2" fill="#111"/>
<rect x="482" y="385.9" width="2" height="1.2" fill="#222"/>
<text transform="translate(488,405.9) rotate(-90)" text-anchor="middle">6</text>
<rect x="482" y="423.9" width="2" height="1.2" fill="#222"/>
<rect x="481" y="442.9" width="3" height="1.2" fill="#111"/>
<rect x="482" y="461.9" width="2" height="1.2" fill="#222"/>
<text transform="translate(488,481.5) rotate(-90)" text-anchor="middle">8</text>
<rect x="482" y="498.9" width="2" height="1.2" fill="#222"/>
<rect x="481" y="517.9" width="3" height="1.2" fill="#111"/>
<rect x="482" y="536.9" width="2" height="1.2" fill="#222"/>
<text transform="translate(488,557.1) rotate(-90)" text-anchor="middle">10</text>
<rect x="482" y="574.9" width="2" height="1.2" fill="#222"/>
<path d="M492,216.500 H1307" stroke="#b4b4b4" stroke-width="1" stroke-dasharray="2 1"/>
<path d="M548.500,159 V583" stroke="#909090" stroke-width="1" stroke-dasharray="2 1"/>
<path d="M492,216.500 H511" stroke="#dfe5cf" stroke-width="1" stroke-dasharray="2 1"/>
<path d="M548.500,159 V179" stroke="#dfe5cf" stroke-width="1" stroke-dasharray="2 1"/>
<path d="M545.500,152.500 H551.500 V155.500 L548.500,158.500 L545.500,155.500 Z" fill="#fff" stroke="#777" stroke-width="0.900"/>
<path d="M484.500,213.500 H487.500 L490.500,216.500 L487.500,219.500 H484.500 Z" fill="#fff" stroke="#777" stroke-width="0.900"/>
<path d="M549,216.500 H1268" stroke="#747a86" stroke-width="1" stroke-dasharray="2 1"/>
<path d="M548.500,217 V583" stroke="#6c7280" stroke-width="1" stroke-dasharray="2 1"/>
<path d="M1268.500,217 V583" stroke="#ccd3da" stroke-width="1"/>
<path d="M549,329.500 H1268" stroke="#adb0b6" stroke-width="1" stroke-dasharray="1 1"/>
<path d="M549,386.500 H1268" stroke="#adb0b6" stroke-width="1" stroke-dasharray="1 1"/>
<path d="M549,462.500 H1268" stroke="#adb0b6" stroke-width="1" stroke-dasharray="1 1"/>
<path d="M549,500.500 H1268" stroke="#adb0b6" stroke-width="1" stroke-dasharray="1 1"/>
<path d="M549,576.500 H1268" stroke="#adb0b6" stroke-width="1" stroke-dasharray="1 1"/>
</svg>
<div class="band" style="top:264.5px;letter-spacing:0.08px;left:547.8px">Rapor Başlığı</div>
<div class="band" style="top:349.5px;letter-spacing:0.08px;left:547.5px">Sayfa Başlığı</div>
<div class="band" style="top:415.5px;letter-spacing:0.36px;left:547.8px">Veri/Detay Bandı</div>
<div class="band" style="top:472.5px;letter-spacing:0.08px;left:548.3px">Sayfa Dipnotu</div>
<div class="band" style="top:529.5px;letter-spacing:0.13px;left:548px">Rapor Dipnotu</div>
<!-- RIGHT-END -->
</body>
</html>
